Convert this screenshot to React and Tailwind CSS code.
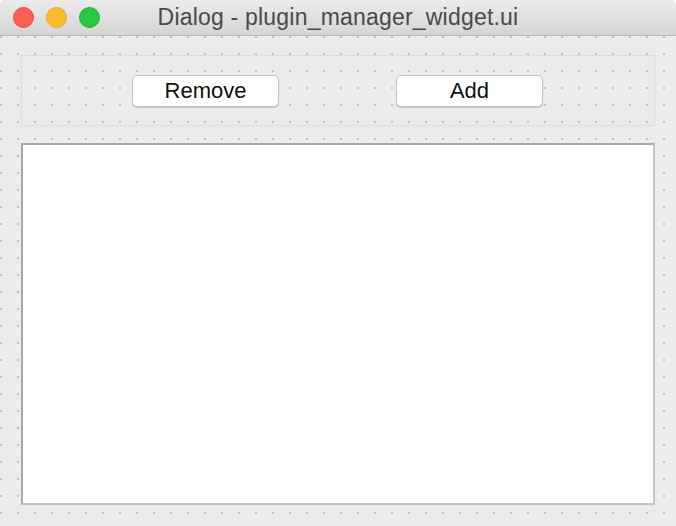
import React from 'react';

// Qt Designer 预览窗口：标题栏 + 带网格点的对话框
const FONT = { fontFamily: '"Liberation Sans", Arial, sans-serif' };

function TrafficLights() {
  return (
    <div className="flex items-center gap-[12px] pl-[13px]">
      <span className="block w-[21px] h-[21px] rounded-full bg-[#fc5f57] border border-[#e8463f]" />
      <span className="block w-[21px] h-[21px] rounded-full bg-[#fdbc2e] border border-[#e6a826]" />
      <span className="block w-[21px] h-[21px] rounded-full bg-[#28c840] border border-[#1fb132]" />
    </div>
  );
}

function MacButton({ children }) {
  return (
    <button className="w-[147px] h-[32px] rounded-[5px] bg-white border border-[#c4c4c4] shadow-[0_1px_1px_rgba(0,0,0,0.18)] text-[22px] text-[#111] leading-none">
      {children}
    </button>
  );
}

export default function App() {
  return (
    <div className="w-[676px] h-[526px] flex flex-col bg-[#ececec] overflow-hidden rounded-t-[5px]" style={FONT}>
      {/* 标题栏 */}
      <div className="relative h-[36px] flex items-center shrink-0 bg-[linear-gradient(#ebebeb,#d5d5d5)] border-b border-[#b9b9b9]">
        <TrafficLights />
        <div className="absolute inset-0 flex items-center justify-center text-[23px] tracking-[0.2px] text-[#4a4a4a] pointer-events-none">
          Dialog - plugin_manager_widget.ui
        </div>
      </div>

      {/* 网格区域 */}
      <div className="flex-1 flex flex-col px-[21px] pt-[19px] bg-[radial-gradient(circle_at_1px_1px,#c2c2c2_1px,transparent_1.5px)] bg-[length:17px_17px]">
        {/* 水平布局 */}
        <div className="h-[71px] flex items-center pl-[110px] gap-[117px] border border-dotted border-[#cfcfcf]">
          <MacButton>Remove</MacButton>
          <MacButton>Add</MacButton>
        </div>

        {/* 列表 */}
        <div className="mt-[17px] h-[362px] bg-white border-2 border-[#a9a9a9] border-b-[#c4c4c4] border-r-[#c4c4c4]" />
      </div>
    </div>
  );
}
